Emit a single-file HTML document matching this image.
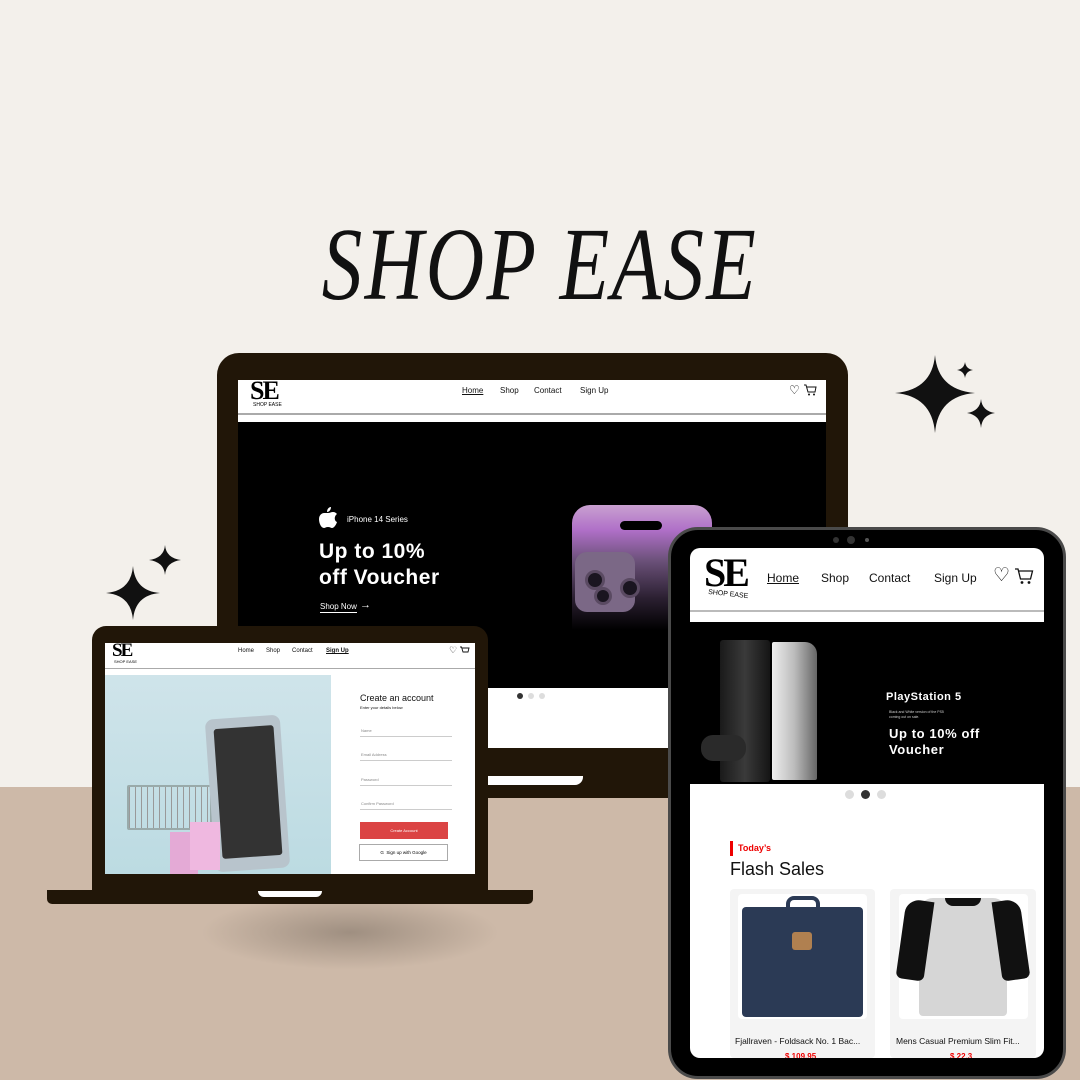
<!DOCTYPE html>
<html><head><meta charset="utf-8"><style>
*{margin:0;padding:0;box-sizing:border-box}
html{width:1080px;height:1080px;overflow:hidden}
body{width:1080px;height:1080px;position:relative;overflow:hidden;background:#f3f0eb;font-family:"Liberation Sans",sans-serif}
.a{position:absolute;white-space:nowrap}
.floor{left:0;top:787px;width:1080px;height:293px;background:#cdb9a8}
.title{left:0;top:205px;width:1080px;text-align:center;font-family:"Liberation Serif",serif;font-style:italic;font-size:104px;color:#111;transform:scaleX(.78);letter-spacing:3px;font-weight:normal}
.nav a{position:absolute;color:#111;text-decoration:none;white-space:nowrap}
.se{font-family:"Liberation Serif",serif;font-weight:bold;color:#000;letter-spacing:-2px}
</style></head><body>
<div class="a floor"></div>
<div class="a" style="left:200px;top:895px;width:300px;height:75px;background:radial-gradient(ellipse at center,rgba(90,80,70,.4),rgba(120,100,90,0) 70%)"></div>
<div class="a title">SHOP EASE</div>

<svg class="a" style="left:0;top:0" width="1080" height="1080">
<g fill="#111">
<path d="M935 355 Q938 390 975 393 Q938 396 935 433 Q932 396 895 393 Q932 390 935 355Z"/>
<path d="M965 362 Q966 369 973 370 Q966 371 965 378 Q964 371 957 370 Q964 369 965 362Z"/>
<path d="M981 399 Q982 411 995 413 Q982 415 981 428 Q980 415 967 413 Q980 411 981 399Z"/>
<path d="M133 566 Q135 591 160 593 Q135 595 133 620 Q131 595 106 593 Q131 591 133 566Z"/>
<path d="M165 545 Q166 558 181 560 Q166 562 165 575 Q164 562 149 560 Q164 558 165 545Z"/>
</g></svg>

<!-- big laptop -->
<div class="a" style="left:217px;top:353px;width:631px;height:445px;background:#211608;border-radius:22px 22px 4px 4px"></div>
<div class="a" style="left:238px;top:380px;width:588px;height:368px;background:#fff"></div>
<div class="a" style="left:238px;top:413px;width:588px;height:2px;background:#aaa"></div>
<div class="a se" style="left:250px;top:376px;font-size:26px">SE</div>
<div class="a" style="left:253px;top:402px;font-size:5px">SHOP EASE</div>
<div class="a nav" style="left:0;top:386px;font-size:8px">
<a style="left:462px;text-decoration:underline">Home</a><a style="left:500px">Shop</a><a style="left:534px">Contact</a><a style="left:580px">Sign Up</a></div>
<div class="a" style="left:789px;top:383px;font-size:12px">♡</div>
<svg class="a" style="left:803px;top:384px" width="14" height="12"><path d="M1 1h2l2 7h7l1-5H4" fill="none" stroke="#111" stroke-width="1"/><circle cx="6" cy="10.5" r="1" fill="#111"/><circle cx="11" cy="10.5" r="1" fill="#111"/></svg>
<div class="a" style="left:238px;top:422px;width:588px;height:266px;background:#000"></div>
<svg class="a" style="left:319px;top:507px" width="18" height="22"><path d="M12 0c0 3-2 5-4 5 0-3 2-5 4-5zM9 6c2 0 3-1 5-1 2 0 3 1 4 2-3 2-3 7 0 8-1 3-3 6-5 6-1 0-2-1-4-1s-3 1-4 1C2 21 0 16 0 12c0-4 3-6 5-6 2 0 3 0 4 0z" fill="#fff"/></svg>
<div class="a" style="left:347px;top:515px;color:#fff;font-size:8px">iPhone 14 Series</div>
<div class="a" style="left:319px;top:539px;color:#fff;font-size:21px;font-weight:bold;line-height:26px;letter-spacing:.5px">Up to 10%<br>off Voucher</div>
<div class="a" style="left:320px;top:602px;color:#fff;font-size:8px;border-bottom:1px solid #fff;padding-bottom:1px">Shop Now</div>
<div class="a" style="left:360px;top:599px;color:#fff;font-size:11px">→</div>
<div class="a" style="left:572px;top:505px;width:140px;height:125px;border-radius:18px 18px 0 0;background:linear-gradient(180deg,#c9a0d0 0%,#b070c8 20%,#6a5078 45%,#2a1f30 75%,#000 100%)"></div>
<div class="a" style="left:620px;top:521px;width:42px;height:9px;border-radius:5px;background:#000"></div>
<div class="a" style="left:575px;top:552px;width:60px;height:60px;border-radius:12px;background:#7b6886"></div>
<div class="a" style="left:585px;top:570px;width:20px;height:20px;border-radius:50%;background:#1a1520;border:3px solid #5a4a62"></div>
<div class="a" style="left:620px;top:578px;width:20px;height:20px;border-radius:50%;background:#1a1520;border:3px solid #5a4a62"></div>
<div class="a" style="left:594px;top:587px;width:18px;height:18px;border-radius:50%;background:#1a1520;border:3px solid #5a4a62"></div>
<div class="a" style="left:517px;top:693px;width:6px;height:6px;border-radius:50%;background:#333"></div>
<div class="a" style="left:528px;top:693px;width:6px;height:6px;border-radius:50%;background:#ddd"></div>
<div class="a" style="left:539px;top:693px;width:6px;height:6px;border-radius:50%;background:#ddd"></div>
<div class="a" style="left:430px;top:776px;width:153px;height:9px;background:#fff;border-radius:0 0 8px 0"></div>

<!-- small laptop -->
<div class="a" style="left:92px;top:626px;width:396px;height:268px;background:#211608;border-radius:14px 14px 0 0"></div>
<div class="a" style="left:47px;top:890px;width:486px;height:14px;background:#211608;border-radius:0 0 5px 5px"></div>
<div class="a" style="left:258px;top:891px;width:64px;height:6px;background:#fff;border-radius:0 0 6px 6px"></div>
<div class="a" style="left:105px;top:643px;width:370px;height:231px;background:#fff"></div>
<div class="a" style="left:105px;top:668px;width:370px;height:1px;background:#aaa"></div>
<div class="a se" style="left:112px;top:640px;font-size:19px">SE</div>
<div class="a" style="left:114px;top:659px;font-size:4px">SHOP EASE</div>
<div class="a nav" style="left:0;top:648px;font-size:6px">
<a style="left:238px">Home</a><a style="left:266px">Shop</a><a style="left:292px">Contact</a><a style="left:326px;text-decoration:underline;font-weight:bold">Sign Up</a></div>
<div class="a" style="left:449px;top:645px;font-size:9px">♡</div>
<svg class="a" style="left:459px;top:646px" width="11" height="10"><path d="M1 1h1.5l1.5 5h5l1-4H3" fill="none" stroke="#111" stroke-width=".9"/></svg>
<div class="a" style="left:105px;top:675px;width:226px;height:199px;background:linear-gradient(180deg,#cfe4ea,#bcdbe2)"></div>
<div class="a" style="left:127px;top:785px;width:85px;height:45px;border:2px solid #9aa;border-radius:2px;background:repeating-linear-gradient(90deg,#999 0 1px,transparent 1px 6px)"></div>
<div class="a" style="left:210px;top:717px;width:75px;height:153px;border-radius:8px;background:#b8c4cc;transform:rotate(-4deg)"></div>
<div class="a" style="left:218px;top:727px;width:60px;height:130px;border-radius:3px;background:#333;transform:rotate(-4deg)"></div>
<div class="a" style="left:170px;top:832px;width:28px;height:42px;background:#e4aad6"></div>
<div class="a" style="left:190px;top:822px;width:30px;height:48px;background:#efb8e0"></div>
<div class="a" style="left:360px;top:693px;font-size:9px;color:#111">Create an account</div>
<div class="a" style="left:360px;top:705px;font-size:4px;color:#111">Enter your details below</div>
<div class="a" style="left:361px;top:728px;font-size:4px;color:#888">Name</div>
<div class="a" style="left:360px;top:736px;width:92px;height:1px;background:#ccc"></div>
<div class="a" style="left:361px;top:752px;font-size:4px;color:#888">Email Address</div>
<div class="a" style="left:360px;top:760px;width:92px;height:1px;background:#ccc"></div>
<div class="a" style="left:361px;top:777px;font-size:4px;color:#888">Password</div>
<div class="a" style="left:360px;top:785px;width:92px;height:1px;background:#ccc"></div>
<div class="a" style="left:361px;top:801px;font-size:4px;color:#888">Confirm Password</div>
<div class="a" style="left:360px;top:809px;width:92px;height:1px;background:#ccc"></div>
<div class="a" style="left:360px;top:822px;width:88px;height:17px;background:#db4444;color:#fff;font-size:4px;text-align:center;line-height:17px">Create Account</div>
<div class="a" style="left:359px;top:844px;width:89px;height:17px;border:1px solid #aaa;font-size:4.5px;text-align:center;line-height:15px">G&nbsp; Sign up with Google</div>

<!-- tablet -->
<div class="a" style="left:668px;top:527px;width:398px;height:552px;background:#000;border:3px solid #4a4a4a;border-radius:30px"></div>
<div class="a" style="left:833px;top:537px;width:6px;height:6px;border-radius:50%;background:#333"></div>
<div class="a" style="left:847px;top:536px;width:8px;height:8px;border-radius:50%;background:#333"></div>
<div class="a" style="left:865px;top:538px;width:4px;height:4px;border-radius:50%;background:#555"></div>
<div class="a" style="left:690px;top:548px;width:354px;height:510px;background:#fff;border-radius:10px;overflow:hidden"></div>
<div class="a" style="left:690px;top:610px;width:354px;height:2px;background:#bbb"></div>
<div class="a se" style="left:704px;top:549px;font-size:40px;letter-spacing:-3px">SE</div>
<div class="a" style="left:708px;top:591px;font-size:7px;transform:rotate(6deg)">SHOP EASE</div>
<div class="a nav" style="left:0;top:571px;font-size:12px">
<a style="left:767px;text-decoration:underline">Home</a><a style="left:821px">Shop</a><a style="left:869px">Contact</a><a style="left:934px">Sign Up</a></div>
<div class="a" style="left:993px;top:564px;font-size:19px">♡</div>
<svg class="a" style="left:1014px;top:568px" width="20" height="17"><path d="M1 1h3l2.5 10h10l2-8H5" fill="none" stroke="#111" stroke-width="1.3"/><circle cx="8" cy="14.5" r="1.4" fill="#111"/><circle cx="15" cy="14.5" r="1.4" fill="#111"/></svg>
<div class="a" style="left:690px;top:622px;width:354px;height:162px;background:#000"></div>
<div class="a" style="left:720px;top:640px;width:50px;height:142px;background:linear-gradient(90deg,#1a1a1a,#3a3a3a,#151515);border-radius:3px"></div>
<div class="a" style="left:772px;top:642px;width:45px;height:138px;background:linear-gradient(90deg,#eee,#bbb,#666);border-radius:2px 12px 2px 2px"></div>
<div class="a" style="left:701px;top:735px;width:45px;height:26px;background:#2a2a2a;border-radius:12px"></div>
<div class="a" style="left:886px;top:691px;color:#fff;font-size:11px;font-weight:bold;letter-spacing:.5px">PlayStation 5</div>
<div class="a" style="left:889px;top:710px;color:#ccc;font-size:3.5px;line-height:5px">Black and White version of the PS5<br>coming out on sale.</div>
<div class="a" style="left:889px;top:726px;color:#fff;font-size:13px;font-weight:bold;line-height:16px;letter-spacing:.6px">Up to 10% off<br>Voucher</div>
<div class="a" style="left:845px;top:790px;width:9px;height:9px;border-radius:50%;background:#ddd"></div>
<div class="a" style="left:861px;top:790px;width:9px;height:9px;border-radius:50%;background:#333"></div>
<div class="a" style="left:877px;top:790px;width:9px;height:9px;border-radius:50%;background:#ddd"></div>
<div class="a" style="left:730px;top:841px;width:3px;height:15px;background:#e00"></div>
<div class="a" style="left:738px;top:843px;font-size:9px;font-weight:bold;color:#e00">Today’s</div>
<div class="a" style="left:730px;top:859px;font-size:18px;color:#111">Flash Sales</div>
<div class="a" style="left:730px;top:889px;width:145px;height:169px;background:#f4f4f4;border-radius:4px"></div>
<div class="a" style="left:738px;top:894px;width:129px;height:125px;background:#fff;border-radius:4px"></div>
<div class="a" style="left:742px;top:907px;width:121px;height:110px;background:#2b3a55;border-radius:4px"></div>
<div class="a" style="left:786px;top:896px;width:34px;height:14px;border:4px solid #2b3a55;border-bottom:none;border-radius:8px 8px 0 0"></div>
<div class="a" style="left:792px;top:932px;width:20px;height:18px;background:#b08050;border-radius:3px"></div>
<div class="a" style="left:735px;top:1036px;font-size:8.5px;color:#111">Fjallraven - Foldsack No. 1 Bac...</div>
<div class="a" style="left:785px;top:1052px;font-size:8px;color:#e00;font-weight:bold;height:6px;overflow:hidden">$ 109.95</div>
<div class="a" style="left:890px;top:889px;width:146px;height:169px;background:#f4f4f4;border-radius:4px"></div>
<div class="a" style="left:899px;top:894px;width:129px;height:125px;background:#fff;border-radius:4px"></div>
<div class="a" style="left:919px;top:898px;width:88px;height:118px;background:#d6d6d6;border-radius:14px 14px 4px 4px"></div>
<div class="a" style="left:901px;top:900px;width:28px;height:80px;background:#111;border-radius:14px 0 6px 6px;transform:rotate(8deg)"></div>
<div class="a" style="left:997px;top:900px;width:28px;height:80px;background:#111;border-radius:0 14px 6px 6px;transform:rotate(-8deg)"></div>
<div class="a" style="left:945px;top:898px;width:36px;height:8px;background:#111;border-radius:0 0 18px 18px"></div>
<div class="a" style="left:896px;top:1036px;font-size:8.5px;color:#111">Mens Casual Premium Slim Fit...</div>
<div class="a" style="left:950px;top:1052px;font-size:8px;color:#e00;font-weight:bold;height:6px;overflow:hidden">$ 22.3</div>
</body></html>
